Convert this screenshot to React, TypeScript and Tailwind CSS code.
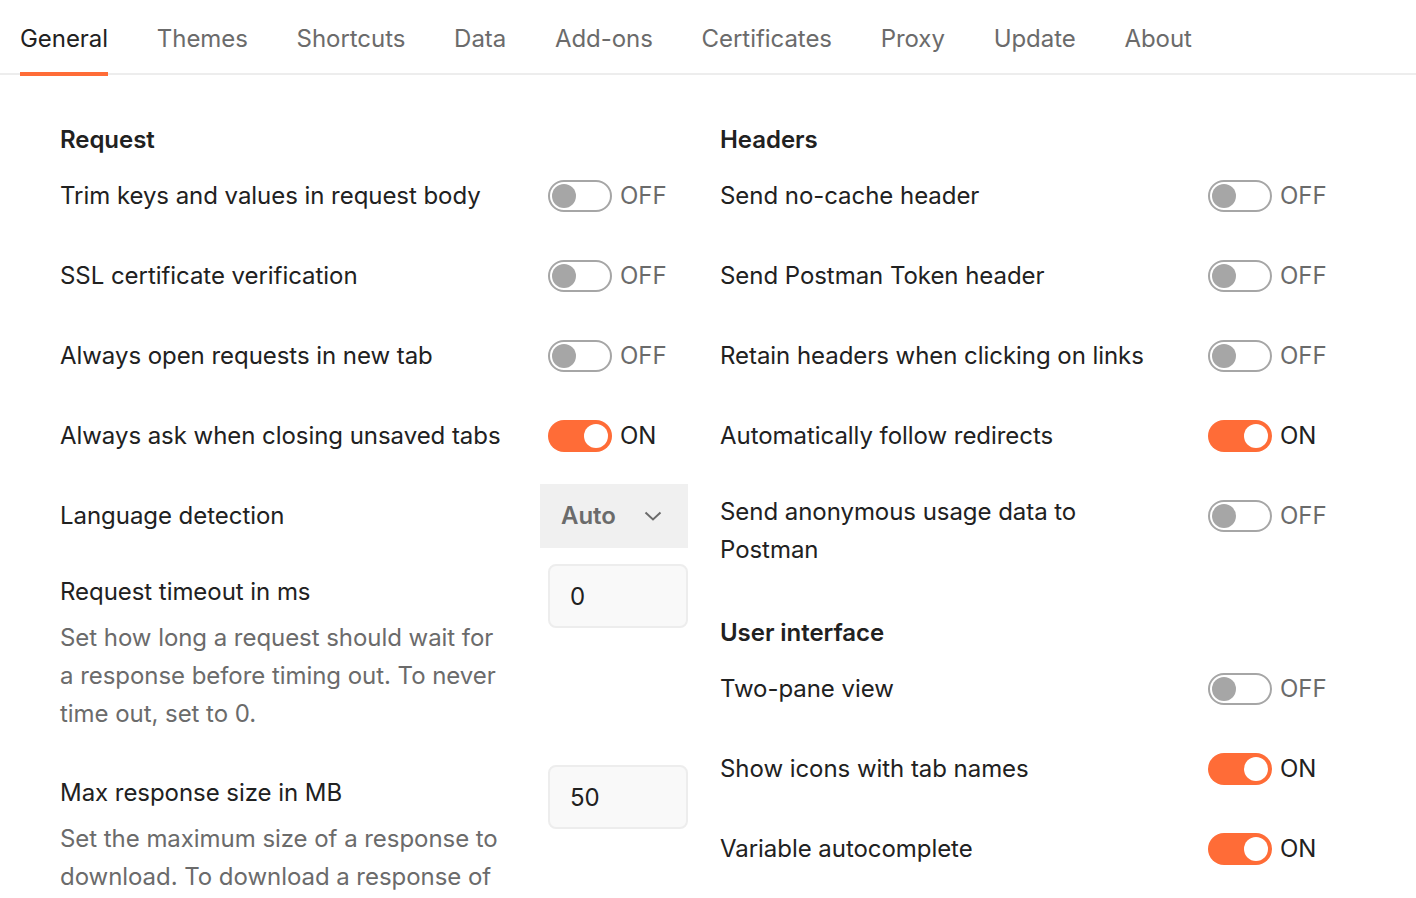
import React from "react";

const tabs = ["General", "Themes", "Shortcuts", "Data", "Add-ons", "Certificates", "Proxy", "Update", "About"];

function Toggle({ on }: { on: boolean }) {
  return (
    <div className="flex items-center">
      {on ? (
        <div className="w-[64px] h-[32px] rounded-full bg-[#ff6c37] flex items-center justify-end pr-[4px]">
          <div className="w-[24px] h-[24px] rounded-full bg-white" />
        </div>
      ) : (
        <div className="w-[64px] h-[32px] rounded-full border-2 border-[#a6a6a6] flex items-center pl-[2px]">
          <div className="w-[24px] h-[24px] rounded-full bg-[#a6a6a6]" />
        </div>
      )}
      <span className={"ml-[8px] text-[24px] leading-[38px] " + (on ? "text-[#212121]" : "text-[#6b6b6b]")}>{on ? "ON" : "OFF"}</span>
    </div>
  );
}

function ToggleRow({ label, on }: { label: string; on: boolean }) {
  return (
    <div className="flex items-center h-[64px] mb-[16px]">
      <div className="w-[488px] text-[24px] leading-[38px] text-[#212121]">{label}</div>
      <Toggle on={on} />
    </div>
  );
}

function Heading({ children }: { children: React.ReactNode }) {
  return <div className="text-[24px] leading-[38px] font-semibold text-[#212121] mb-[5px]">{children}</div>;
}

export default function App() {
  return (
    <div
      className="w-[1416px] h-[898px] bg-white overflow-hidden tracking-[-0.05px]"
      style={{ fontFamily: "Inter, 'Noto Sans', sans-serif" }}
    >
      <div className="flex h-[75px] border-b-2 border-[#ededed] pl-[20px] gap-[48.75px]">
        {tabs.map((t, i) => (
          <div
            key={t}
            className={"relative h-[75px] flex items-center pt-[2px] text-[24px] " + (i === 0 ? "text-[#212121]" : "text-[#6b6b6b]")}
          >
            {t}
            {i === 0 && <div className="absolute left-0 right-0 bottom-[-1px] h-[4px] bg-[#ff6c37]" />}
          </div>
        ))}
      </div>
      <div className="flex pl-[60px] pt-[46px] gap-[32px]">
        <div className="w-[628px] flex flex-col">
          <Heading>Request</Heading>
          <ToggleRow label="Trim keys and values in request body" on={false} />
          <ToggleRow label="SSL certificate verification" on={false} />
          <ToggleRow label="Always open requests in new tab" on={false} />
          <ToggleRow label="Always ask when closing unsaved tabs" on={true} />
          <div className="flex items-center h-[64px] mb-[16px]">
            <div className="w-[480px] text-[24px] leading-[38px] text-[#212121]">Language detection</div>
            <div className="w-[148px] h-[64px] bg-[#f0f0f0] flex items-center pl-[21px] pr-[26px] justify-between">
              <span className="text-[24px] font-semibold text-[#6b6b6b]">Auto</span>
              <svg width="18" height="10" viewBox="0 0 18 10" fill="none">
                <path d="M1.5 1.5L9 8.5L16.5 1.5" stroke="#6b6b6b" strokeWidth="2" />
              </svg>
            </div>
          </div>
          <div className="flex items-start mb-[32px]">
            <div className="w-[488px] pt-[9px]">
              <div className="text-[24px] leading-[38px] text-[#212121]">Request timeout in ms</div>
              <div className="mt-[8px] w-[450px] text-[24px] leading-[38px] text-[#6b6b6b]">
                Set how long a request should wait for a response before timing out. To never time out, set to 0.
              </div>
            </div>
            <div className="w-[140px] h-[64px] rounded-[8px] border-2 border-[#ededed] bg-[#f9f9f9] flex items-center pl-[20px] pt-[2px] text-[24px] text-[#212121]">
              0
            </div>
          </div>
          <div className="flex items-start">
            <div className="w-[488px] pt-[9px]">
              <div className="text-[24px] leading-[38px] text-[#212121]">Max response size in MB</div>
              <div className="mt-[8px] w-[450px] text-[24px] leading-[38px] text-[#6b6b6b]">
                Set the maximum size of a response to download. To download a response of any size, set to 0.
              </div>
            </div>
            <div className="w-[140px] h-[64px] rounded-[8px] border-2 border-[#ededed] bg-[#f9f9f9] flex items-center pl-[20px] pt-[2px] text-[24px] text-[#212121]">
              50
            </div>
          </div>
        </div>
        <div className="w-[628px] flex flex-col">
          <Heading>Headers</Heading>
          <ToggleRow label="Send no-cache header" on={false} />
          <ToggleRow label="Send Postman Token header" on={false} />
          <ToggleRow label="Retain headers when clicking on links" on={false} />
          <ToggleRow label="Automatically follow redirects" on={true} />
          <div className="flex items-start mb-[45px]">
            <div className="w-[488px] pt-[9px] pr-[100px] text-[24px] leading-[38px] text-[#212121]">
              Send anonymous usage data to Postman
            </div>
            <div className="h-[64px] flex items-center">
              <Toggle on={false} />
            </div>
          </div>
          <Heading>User interface</Heading>
          <ToggleRow label="Two-pane view" on={false} />
          <ToggleRow label="Show icons with tab names" on={true} />
          <ToggleRow label="Variable autocomplete" on={true} />
        </div>
      </div>
    </div>
  );
}
